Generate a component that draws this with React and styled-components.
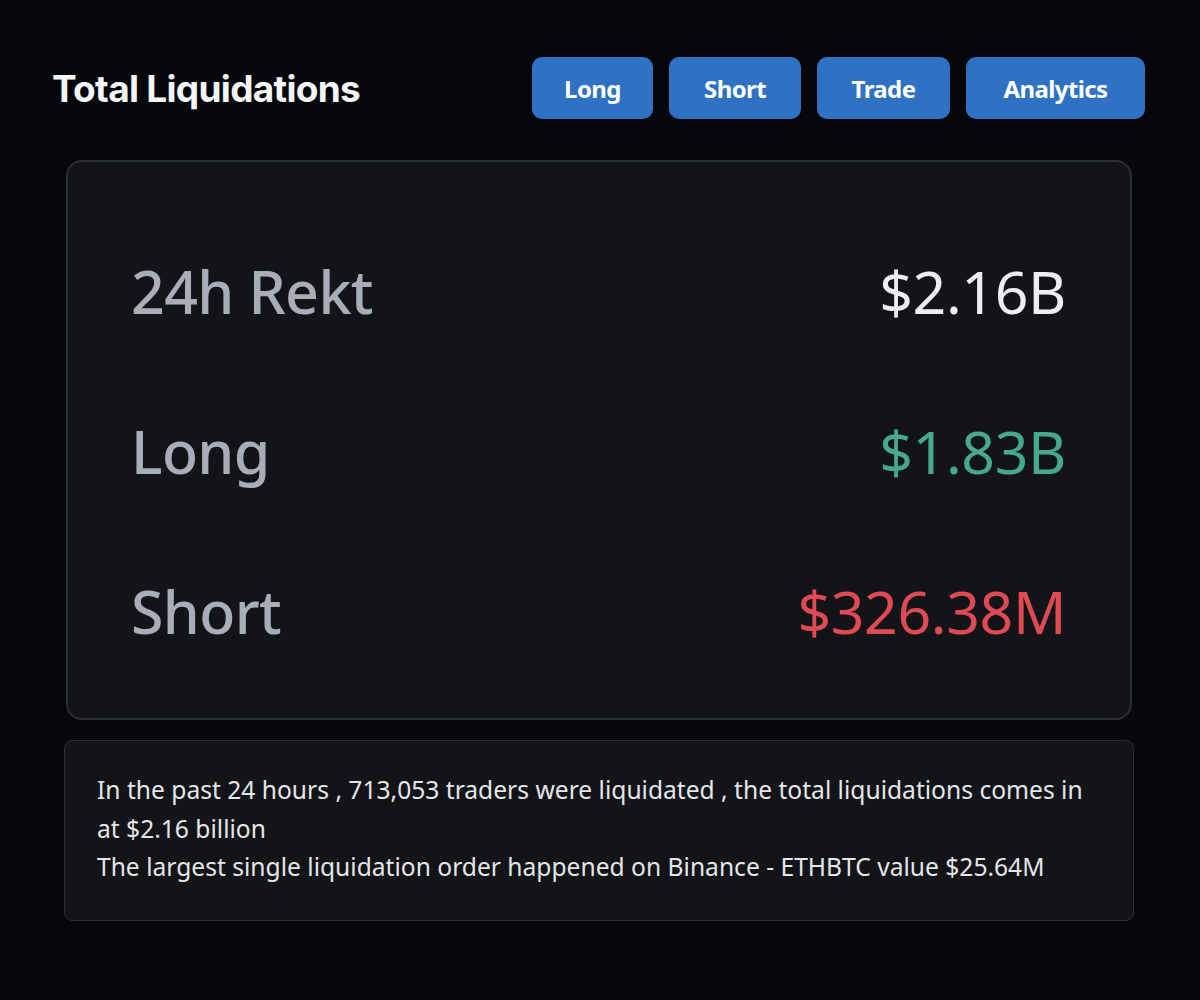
import React from "react"
import styled, { createGlobalStyle } from "styled-components"

const GlobalStyle = createGlobalStyle`
  html, body {
    margin: 0;
    padding: 0;
    background: #05070b;
  }
  body {
    width: 1200px;
    min-height: 1000px;
    font-family: "Noto Sans", "Liberation Sans", sans-serif;
  }
`

const Page = styled.div`
  padding: 57px 55px 0 52px;
`

const Header = styled.div`
  display: flex;
  align-items: center;
  justify-content: space-between;
  height: 62px;
`

const Title = styled.h1`
  margin: 0;
  font-family: Inter, "Liberation Sans", sans-serif;
  font-weight: 700;
  font-size: 37px;
  letter-spacing: -0.7px;
  color: #f4f5f7;
`

const Buttons = styled.div`
  display: flex;
  gap: 16px;
`

const NavButton = styled.button`
  height: 62px;
  min-width: ${(p) => p.$w}px;
  padding: 0 28px;
  border: none;
  border-radius: 10px;
  background: #2f72c3;
  color: #ffffff;
  font-family: "Noto Sans", "Liberation Sans", sans-serif;
  font-weight: 700;
  font-size: 24px;
  letter-spacing: -0.6px;
  cursor: pointer;
`

const Body = styled.div`
  margin: 41px 13px 0 14px;
  display: flex;
  flex-direction: column;
  gap: 20px;
`

const Card = styled.div`
  background: #131418;
  border: 2px solid #2b2e33;
  border-radius: 16px;
  padding: 49px 64px 27px 63px;
`

const Row = styled.div`
  display: flex;
  justify-content: space-between;
  align-items: center;
  height: 160px;
`

const Label = styled.span`
  font-size: 59px;
  font-weight: 500;
  color: #a8aeb7;
  letter-spacing: -0.6px;
`

const Value = styled.span`
  font-size: 59px;
  font-weight: 400;
  color: ${(p) => p.$color};
  letter-spacing: -0.4px;
`

const Info = styled.div`
  margin: 0 -2px;
  background: #131418;
  border: 1px solid #2b2e33;
  border-radius: 8px;
  padding: 30px 40px 33px 32px;
  font-size: 24.6px;
  line-height: 38.5px;
  color: #e4e6e9;
`

const rows = [
  { label: "24h Rekt", value: "$2.16B", color: "#eceef1" },
  { label: "Long", value: "$1.83B", color: "#45a98a" },
  { label: "Short", value: "$326.38M", color: "#e04a55" },
]

const App = () => (
  <>
    <GlobalStyle />
    <Page>
      <Header>
        <Title>Total Liquidations</Title>
        <Buttons>
          <NavButton $w={121}>Long</NavButton>
          <NavButton $w={132}>Short</NavButton>
          <NavButton $w={133}>Trade</NavButton>
          <NavButton $w={179}>Analytics</NavButton>
        </Buttons>
      </Header>
      <Body>
        <Card>
          {rows.map((r) => (
            <Row key={r.label}>
              <Label>{r.label}</Label>
              <Value $color={r.color}>{r.value}</Value>
            </Row>
          ))}
        </Card>
        <Info>
          In the past 24 hours , 713,053 traders were liquidated , the total
          liquidations comes in at $2.16 billion
          <br />
          The largest single liquidation order happened on Binance - ETHBTC
          value $25.64M
        </Info>
      </Body>
    </Page>
  </>
)

export default App
